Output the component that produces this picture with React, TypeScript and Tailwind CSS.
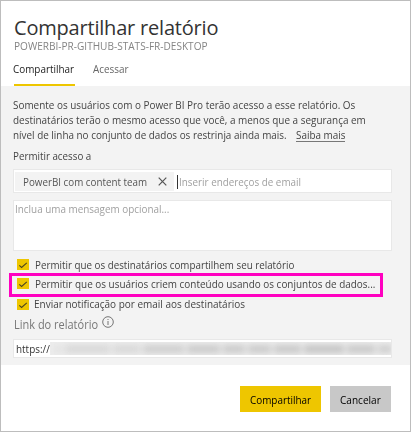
import type { ReactNode } from "react";

// Condensed run of text: the glyphs are narrowed about their left edge.
function T({ children, className = "scale-x-90" }: { children: ReactNode; className?: string }) {
  return <span className={`block origin-left ${className}`}>{children}</span>;
}

function Check({ children }: { children: ReactNode }) {
  return (
    <label className="flex h-[11px] items-center gap-[7px]">
      <span className="flex h-[11px] w-3 shrink-0 items-center justify-center bg-[#eec600]">
        <svg viewBox="0 0 12 12" className="size-3" fill="none" stroke="#4a4420" strokeWidth="1.1">
          <path d="M2.3 6.3 4.6 8.4 9.8 3.9" />
        </svg>
      </span>
      {children}
    </label>
  );
}

const smudges = [
  "w-[8px] bg-[#e2e2e2]",
  "w-[45px] bg-[#d8d8d8]",
  "w-[27px] bg-[#d8d8d8]",
  "w-[41px] bg-[#cecece]",
  "w-[33px] bg-[#cacaca]",
  "w-[22px] bg-[#cacaca]",
  "w-[23px] bg-[#cacaca]",
  "w-[27px] bg-[#c8c8c8]",
  "w-[40px] bg-[#c4c4c4]",
  "w-[28px] bg-[#c8c8c8]",
  "w-[14px] bg-[#cecece]",
];

export default function App() {
  return (
    <div className="flex h-[432px] w-[411px] flex-col border border-[#bdbdbd] bg-white font-['Open_Sans','Segoe_UI',sans-serif] text-[11px] leading-[15px] whitespace-nowrap text-[#444]">
      <header className="flex h-[85px] shrink-0 flex-col pl-3">
        <h1 className="mt-[15px] h-[22px] pl-px text-[20px] leading-[23px] tracking-[-0.2px] text-[#333]">Compartilhar relatório</h1>
        <p className="h-[14px] pl-px text-[11.5px] leading-[15px] text-[#848484]"><T className="scale-x-[.875]">POWERBI-PR-GITHUB-STATS-FR-DESKTOP</T></p>
        <nav className="mt-2 flex gap-[18px]">
          <span className="ml-px h-[26px] w-[61px] border-b-2 border-[#eec600] leading-[18px] text-[#222]"><T className="-ml-px scale-x-90">Compartilhar</T></span>
          <span className="leading-[18px] text-[#666]"><T>Acessar</T></span>
        </nav>
      </header>

      <main className="flex h-[279px] shrink-0 flex-col bg-[#f3f3f3] pl-3">
        <div className="mt-[11px]">
          <T className="scale-x-[.902]">Somente os usuários com o Power BI Pro terão acesso a esse relatório. Os</T>
          <T className="scale-x-[.904]">destinatários terão o mesmo acesso que você, a menos que a segurança em</T>
          <div className="flex">
            <span className="w-[283px]"><T>nível de linha no conjunto de dados os restrinja ainda mais.</T></span>
            <a className="h-[15px] w-[49px] border-b border-[#777]"><T>Saiba mais</T></a>
          </div>
        </div>
        <div className="mt-[6px] h-[15px]"><T className="scale-x-[.89]">Permitir acesso a</T></div>

        <div className="mt-[6px] flex h-6 w-[379px] items-center border border-[#e8e8e8] bg-white pl-px">
          <span className="flex h-[19px] w-[159px] items-center bg-[#f3f3f3] pl-2">
            <span className="w-[135px] leading-[17px] text-[#555]"><T className="scale-x-[.893]">PowerBI com content team</T></span>
            <svg viewBox="0 0 9 9" className="size-[9px]" stroke="#555" strokeWidth="1.2">
              <path d="M.7.7 8.3 8.3M8.3.7.7 8.3" />
            </svg>
          </span>
          <span className="mt-px ml-[3px] h-[14px] w-px bg-[#333]" />
          <span className="mt-px ml-px text-[#a0a0a0]"><T className="scale-x-[.896]">Inserir endereços de email</T></span>
        </div>

        <div className="mt-[7px] h-[51px] w-[379px] border border-[#e8e8e8] bg-white pl-px text-[#a0a0a0]"><T>Inclua uma mensagem opcional...</T></div>

        <div className="mt-2 pl-1">
          <Check><T className="-ml-px scale-x-[.891]">Permitir que os destinatários compartilhem seu relatório</T></Check>
        </div>
        <div className="mt-[3px] -ml-1 h-6 w-[374px] border-3 border-[#ff00c0] pt-[2px] pl-[5px]">
          <Check><T className="-ml-px scale-x-[.903]">Permitir que os usuários criem conteúdo usando os conjuntos de dados...</T></Check>
        </div>
        <div className="mt-[2px] pl-1">
          <Check><T className="-mt-0.5 -ml-0.5 scale-x-[.907]">Enviar notificação por email aos destinatários</T></Check>
        </div>

        <div className="mt-[6px] flex h-[18px] pl-px">
          <span className="w-[88px] text-[12px] leading-[17px] text-[#777]"><T className="scale-x-[.916]">Link do relatório</T></span>
          <svg viewBox="0 0 12 12" className="size-3" fill="none" stroke="#666" strokeWidth=".9">
            <circle cx="6" cy="6" r="5.3" />
            <path d="M6 5v4M6 3v1" />
          </svg>
        </div>
        <div className="mt-[5px] flex h-[19px] w-[379px] items-center overflow-hidden border border-[#e8e8e8] bg-white pl-[2px]">
          <span className="w-[34px] text-[#333]"><T>https://</T></span>
          <span className="flex h-[13px] w-[341px] items-center overflow-hidden bg-[#ededed] pl-1">
            <span className="flex gap-[3px] blur-[3px]">
              {smudges.map((s, i) => <i key={i} className={`h-[8px] shrink-0 ${s}`} />)}
            </span>
          </span>
        </div>
      </main>

      <footer className="flex justify-end gap-[9px] pt-[21px] pr-[19px] text-black">
        <button className="flex h-[26px] w-[81px] items-center bg-[#eec600] pl-[10px]"><T>Compartilhar</T></button>
        <button className="flex h-[26px] w-[61px] items-center bg-[#c8c8c8] pl-[10px]"><T className="scale-x-[.915]">Cancelar</T></button>
      </footer>
    </div>
  );
}
